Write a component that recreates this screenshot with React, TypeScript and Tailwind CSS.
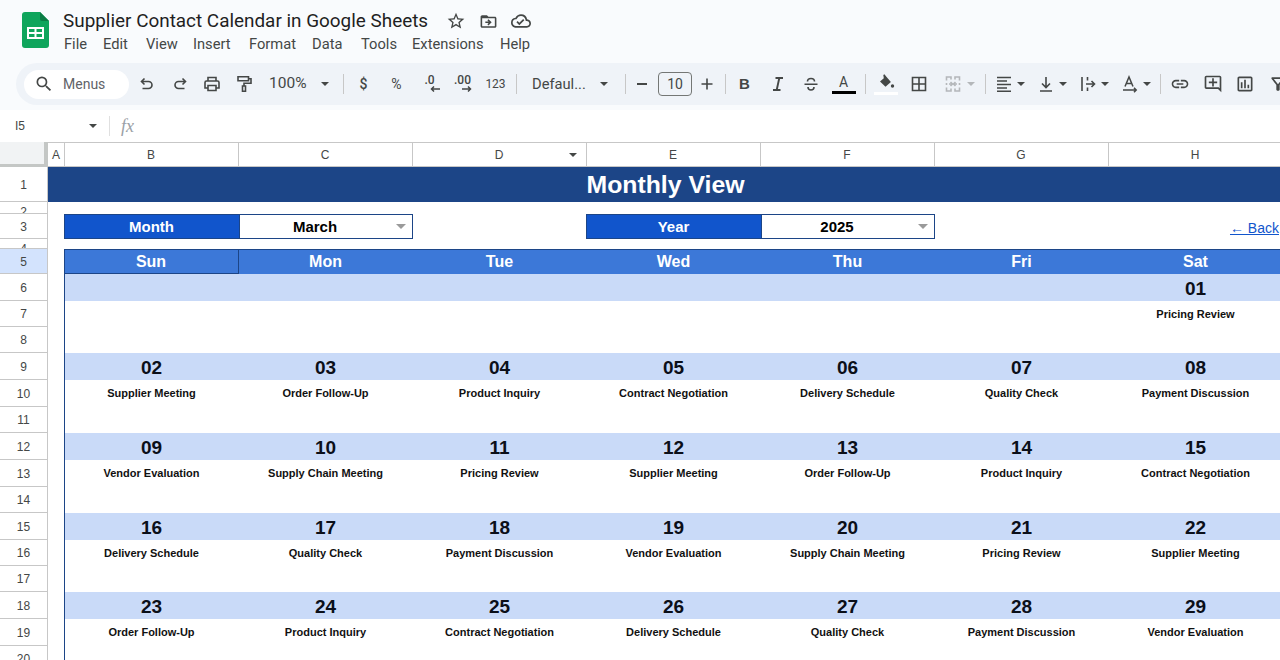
import { Fragment, type ReactNode } from "react";
import {
  MdDriveFileMoveOutline,
  MdLink,
  MdOutlineAddComment,
  MdOutlineCloudDone,
  MdOutlineFilterAlt,
  MdOutlineInsertChart,
  MdSearch,
  MdStarBorder,
} from "react-icons/md";

const menus = [
  { label: "File", cls: "w-[39px]" },
  { label: "Edit", cls: "w-[43px]" },
  { label: "View", cls: "w-[47px]" },
  { label: "Insert", cls: "w-[56px]" },
  { label: "Format", cls: "w-[63px]" },
  { label: "Data", cls: "w-[49px]" },
  { label: "Tools", cls: "w-[51px]" },
  { label: "Extensions", cls: "w-[88px]" },
  { label: "Help", cls: "w-[40px]" },
];

const columns = ["B", "C", "D", "E", "F", "G", "H"];
const days = ["Sun", "Mon", "Tue", "Wed", "Thu", "Fri", "Sat"];

const weeks = [
  {
    dates: ["", "", "", "", "", "", "01"],
    events: ["", "", "", "", "", "", "Pricing Review"],
  },
  {
    dates: ["02", "03", "04", "05", "06", "07", "08"],
    events: ["Supplier Meeting", "Order Follow-Up", "Product Inquiry", "Contract Negotiation", "Delivery Schedule", "Quality Check", "Payment Discussion"],
  },
  {
    dates: ["09", "10", "11", "12", "13", "14", "15"],
    events: ["Vendor Evaluation", "Supply Chain Meeting", "Pricing Review", "Supplier Meeting", "Order Follow-Up", "Product Inquiry", "Contract Negotiation"],
  },
  {
    dates: ["16", "17", "18", "19", "20", "21", "22"],
    events: ["Delivery Schedule", "Quality Check", "Payment Discussion", "Vendor Evaluation", "Supply Chain Meeting", "Pricing Review", "Supplier Meeting"],
  },
  {
    dates: ["23", "24", "25", "26", "27", "28", "29"],
    events: ["Order Follow-Up", "Product Inquiry", "Contract Negotiation", "Delivery Schedule", "Quality Check", "Payment Discussion", "Vendor Evaluation"],
  },
];

function Caret({ className = "border-t-[#444746]" }: { className?: string }) {
  return <span className={`inline-block h-0 w-0 border-x-[4px] border-t-[4px] border-x-transparent ${className}`} />;
}

function Sep({ className = "" }: { className?: string }) {
  return <span className={`h-[20px] w-px shrink-0 bg-[#c7c7c7] ${className}`} />;
}

function Tool({ children, className = "w-[33px]" }: { children: ReactNode; className?: string }) {
  return <span className={`flex h-full shrink-0 items-center justify-center text-[#444746] ${className}`}>{children}</span>;
}

function CaretTool({ children }: { children: ReactNode }) {
  return (
    <span className="flex h-full w-[42px] shrink-0 items-center pl-[7px] text-[#444746]">
      {children}
      <span className="ml-[3px] flex">
        <Caret />
      </span>
    </span>
  );
}

// thin 20px toolbar glyph, the sheets icons are lighter than the packaged ones
function Glyph({ d, width = 1.6 }: { d: string; width?: number }) {
  return (
    <svg width="20" height="20" viewBox="0 0 20 20" fill="none" stroke="currentColor" strokeWidth={width}>
      <path d={d} />
    </svg>
  );
}

function SheetsLogo() {
  return (
    <svg width="27" height="36" viewBox="0 0 27 36" className="shrink-0">
      <path d="M3 0h15l9 9v24a3 3 0 0 1-3 3H3a3 3 0 0 1-3-3V3a3 3 0 0 1 3-3z" fill="#0fa55c" />
      <path d="M18 0l9 9h-7a2 2 0 0 1-2-2z" fill="#0b7c45" />
      <path d="M5 15h17v12H5z" fill="#fff" />
      <path d="M7 17h5.500v3H7zM14.500 17H20v3h-5.500zM7 22h5.500v3H7zM14.500 22H20v3h-5.500z" fill="#0fa55c" />
    </svg>
  );
}

function Toolbar() {
  return (
    <div className="ml-4 flex h-[42px] items-center rounded-l-[21px] bg-[#eff3f8] pl-2 font-['Roboto',sans-serif]">
      <div className="flex h-[29px] w-[105px] shrink-0 items-center rounded-full bg-white pl-[10px] text-[#444746]">
        <MdSearch size={20} />
        <span className="ml-[9px] text-[14px] text-[#5f6368]">Menus</span>
      </div>
      <Tool className="ml-px w-[33px]"><Glyph d="M7.500 4.500l-3 3 3 3M4.500 7.500h7a3.500 3.500 0 0 1 0 7H5.500" /></Tool>
      <Tool><Glyph d="M12.500 4.500l3 3-3 3M15.500 7.500h-7a3.500 3.500 0 0 0 0 7h6" /></Tool>
      <Tool className="w-[32px]"><Glyph d="M6 7V3.500h8V7M5.500 14H3V8.500A1.500 1.500 0 0 1 4.500 7h11A1.500 1.500 0 0 1 17 8.500V14h-2.500M6 11.500h8v5H6z" /></Tool>
      <Tool className="w-[32px]"><Glyph d="M4 2.800h10.500v4H4zM14.500 4.800h2.500v4.400H10v2.800M8.500 12h3v5.200h-3z" /></Tool>
      <span className="flex h-full w-[75px] shrink-0 items-center pl-[9px] text-[15.500px] text-[#444746]">
        100%
        <span className="ml-[14px] flex"><Caret /></span>
      </span>
      <Sep className="ml-[8px]" />
      <Tool className="ml-[3px] w-[33px]"><span className="text-[14px] font-medium">$</span></Tool>
      <Tool><span className="text-[14px]">%</span></Tool>
      <Tool>
        <span className="flex flex-col items-center pb-[2px]">
          <span className="text-[12px] font-medium leading-[12px]">.0</span>
          <svg width="10" height="6" viewBox="0 0 10 6" className="ml-[10px]" fill="none" stroke="currentColor" strokeWidth="1.5">
            <path d="M10 3H1.500M4 .5L1.500 3 4 5.500" />
          </svg>
        </span>
      </Tool>
      <Tool>
        <span className="flex flex-col items-center pb-[2px]">
          <span className="text-[12px] font-medium leading-[12px]">.00</span>
          <svg width="10" height="6" viewBox="0 0 10 6" className="ml-[8px]" fill="none" stroke="currentColor" strokeWidth="1.5">
            <path d="M0 3h8.500M6 .5L8.500 3 6 5.500" />
          </svg>
        </span>
      </Tool>
      <Tool><span className="text-[12px]">123</span></Tool>
      <Sep className="ml-[4px]" />
      <span className="flex h-full w-[100px] shrink-0 items-center pl-[15px] text-[14.700px] text-[#444746]">
        Defaul...
        <span className="ml-[14px] flex"><Caret /></span>
      </span>
      <Sep className="ml-[8px]" />
      <Tool className="w-[32px]"><span className="h-[2px] w-[10px] bg-[#444746]" /></Tool>
      <span className="flex h-[24px] w-[34px] shrink-0 items-center justify-center rounded-[4px] border border-[#747775] text-[14px] text-[#444746]">10</span>
      <Tool className="w-[30px]"><Glyph d="M10 4.500v11M4.500 10h11" /></Tool>
      <Sep className="ml-[3px]" />
      <Tool className="ml-[2px] w-[33px]"><span className="font-['Liberation_Sans',sans-serif] text-[15px] font-bold">B</span></Tool>
      <Tool><Glyph d="M7.500 4h7.500M5 16h7.500M11.300 4L8.700 16" width={1.9} /></Tool>
      <Tool><Glyph d="M6.500 7.500a3.500 3 0 0 1 7 0M3.500 10.300h13M7 13a3 3 0 0 0 6 0" /></Tool>
      <Tool>
        <span className="flex flex-col items-center">
          <span className="text-[14px] leading-[15px]">A</span>
          <span className="mt-[1px] h-[3px] w-[24px] bg-black" />
        </span>
      </Tool>
      <Sep className="ml-[5px]" />
      <Tool className="ml-[3px] w-[33px]">
        <span className="flex flex-col items-center">
          <svg width="20" height="17" viewBox="0 0 20 17" fill="currentColor">
            <path d="M7.300 1l1.100-.8 2.200 2.700 4.300 5.100-5.400 4.700L4 7.600l3.800-3.300z" />
            <circle cx="16.500" cy="12" r="1.700" />
          </svg>
          <span className="mt-[1px] h-[3px] w-[24px] bg-white" />
        </span>
      </Tool>
      <Tool className="w-[34px]"><Glyph d="M3.500 3.500h13v13h-13zM10 3.500v13M3.500 10h13" /></Tool>
      <span className="flex h-full w-[45px] shrink-0 items-center pl-[7px] text-[#b4b7ba]">
        <Glyph d="M8 5.500V3H3.500v3.500M12 5.500V3h4.500v3.500M8 14.500V17H3.500v-3.500M12 14.500V17h4.500v-3.500M3.500 9v2M16.500 9v2M6 10h3M14 10h-3M7.500 8l2 2-2 2M12.500 8l-2 2 2 2" />
        <span className="ml-[4px] flex"><Caret className="border-t-[#b4b7ba]" /></span>
      </span>
      <Sep className="ml-[4px]" />
      <span className="ml-px" />
      <CaretTool><Glyph d="M3 3.500h14M3 7h10M3 10.500h14M3 14h10M3 17.200h14" width={1.4} /></CaretTool>
      <CaretTool><Glyph d="M10 3v10M6 9.500l4 4 4-4M4 17h12" /></CaretTool>
      <CaretTool><Glyph d="M4 3v14M9.500 3v3.500M9.500 13.500V17M8 10h8.500M13.500 7l3 3-3 3" /></CaretTool>
      <CaretTool><Glyph d="M5 12.500L9 3l4 9.500M6.300 9.500h5.400M3 16h13M14 13.800l2.200 2.200-2.200 2.200" width={1.5} /></CaretTool>
      <Sep className="ml-[5px]" />
      <Tool className="ml-[3px] w-[32px]"><MdLink size={20} /></Tool>
      <Tool><MdOutlineAddComment size={20} /></Tool>
      <Tool className="w-[32px]"><MdOutlineInsertChart size={20} /></Tool>
      <Tool className="w-[34px]"><MdOutlineFilterAlt size={20} /></Tool>
    </div>
  );
}

function RowHead({ n }: { n: number }) {
  const small = n === 2 || n === 4;
  return (
    <div
      className={`flex justify-center overflow-hidden border-b border-r border-[#c7c7c7] text-[12px] leading-none text-[#444746] ${
        small ? "items-start pt-[4px]" : "items-center pt-px"
      } ${n === 5 ? "bg-[#d3e3fd]" : "bg-white"}`}
    >
      {n}
    </div>
  );
}

function Picker({ label, value }: { label: string; value: string }) {
  return (
    <>
      <div className="-ml-px flex items-center justify-center border border-r-0 border-[#1c4587] bg-[#1155cc] pr-px text-[15px] font-bold leading-none text-white">{label}</div>
      <div className="relative flex items-center justify-center border border-[#1c4587] bg-white pr-[22px] text-[15px] font-bold leading-none text-black">
        {value}
        <span className="absolute right-[6px] top-[9px] flex">
          <span className="inline-block h-0 w-0 border-x-[5px] border-t-[5px] border-x-transparent border-t-[#9a9a9a]" />
        </span>
      </div>
    </>
  );
}

export default function App() {
  return (
    <div className="flex h-[660px] w-[1280px] flex-col overflow-hidden bg-white font-['Liberation_Sans',sans-serif]">
      <div className="h-[110px] shrink-0 bg-[#f9fbfd] pt-[12px]">
        <div className="flex h-[36px] pl-[22px]">
          <SheetsLogo />
          <div className="ml-[14px] font-['Roboto',sans-serif]">
            <div className="flex h-[18px] items-center text-[18.900px] leading-none text-[#1f1f1f]">
              <span className="w-[383px] whitespace-nowrap">Supplier Contact Calendar in Google Sheets</span>
              <MdStarBorder size={20} className="text-[#444746]" />
              <MdDriveFileMoveOutline size={19} className="ml-[13px] text-[#444746]" />
              <MdOutlineCloudDone size={20} className="ml-[13px] text-[#444746]" />
            </div>
            <div className="mt-[5px] flex pl-px text-[14.700px] leading-[18px] text-[#444746]">
              {menus.map((m) => (
                <span key={m.label} className={m.cls}>{m.label}</span>
              ))}
            </div>
          </div>
        </div>
        <div className="mt-[15px]">
          <Toolbar />
        </div>
      </div>

      <div className="flex h-[32px] shrink-0 items-center bg-white text-[#444746]">
        <span className="w-[89px] pl-[15px] text-[12px]">I5</span>
        <Caret />
        <span className="ml-[12px] h-[20px] w-px bg-[#e0e0e0]" />
        <span className="ml-[11px] font-['Liberation_Serif',serif] text-[18px] italic text-[#9aa0a6]">fx</span>
      </div>

      <div className="grid min-h-0 flex-1 grid-cols-[48px_17px_repeat(7,174px)] grid-rows-[25px_35px_12px_25px_10px_25px_27px_26px_26px_27px_27px_26px_27px_27px_26px_27px_26px_26px_27px_27px_26px] overflow-hidden">
        {/* column headers */}
        <div className="border-b-[3px] border-r-[4px] border-[#c4c7c5] bg-[#f1f3f4]" />
        <div className="flex items-center justify-center border-y border-r border-[#c7c7c7] bg-white text-[12px] text-[#444746]">A</div>
        {columns.map((c) => (
          <div key={c} className="relative flex items-center justify-center border-y border-r border-[#c7c7c7] bg-white pr-px text-[12px] text-[#444746]">
            {c}
            {c === "D" && (
              <span className="absolute right-[9px] top-[10px] flex"><Caret /></span>
            )}
          </div>
        ))}

        <RowHead n={1} />
        <div className="col-span-8 flex items-center justify-center bg-[#1c4587] pt-px text-[24.800px] font-bold leading-none text-white">Monthly View</div>

        <RowHead n={2} />
        <div className="col-span-8" />

        <RowHead n={3} />
        <div />
        <Picker label="Month" value="March" />
        <div />
        <Picker label="Year" value="2025" />
        <div />
        <div className="flex items-center justify-end pr-[4px] pt-[3px] text-[14px] leading-none text-[#1155cc] underline">← Back</div>

        <RowHead n={4} />
        <div className="col-span-8" />

        <RowHead n={5} />
        <div className="border-r border-[#1c4587]" />
        {days.map((d, i) => (
          <div
            key={d}
            className={`flex items-center justify-center border-y border-t-[#1c4587] bg-[#3c78d8] pr-px text-[16px] font-bold leading-none text-white ${
              i === 0 ? "border-r border-b-[#1c4587] border-r-[#1c4587]" : "border-b-[#3c78d8]"
            }`}
          >
            {d}
          </div>
        ))}

        {/* calendar weeks, three sheet rows each */}
        {weeks.map((w, wi) => {
          const first = 6 + wi * 3;
          return (
            <Fragment key={first}>
              <RowHead n={first} />
              <div className="border-r border-[#1c4587]" />
              {w.dates.map((d, i) => (
                <div key={i} className="flex items-center justify-center bg-[#c9daf8] pr-px pt-px text-[19px] font-bold leading-none text-[#0b0f19]">
                  {d}
                </div>
              ))}

              <RowHead n={first + 1} />
              <div className="border-r border-[#1c4587]" />
              {w.events.map((e, i) => (
                <div key={i} className="flex items-center justify-center pr-px text-[11px] font-bold leading-none text-[#111]">
                  {e}
                </div>
              ))}

              <RowHead n={first + 2} />
              <div className="border-r border-[#1c4587]" />
              <div className="col-span-7" />
            </Fragment>
          );
        })}
      </div>
    </div>
  );
}
